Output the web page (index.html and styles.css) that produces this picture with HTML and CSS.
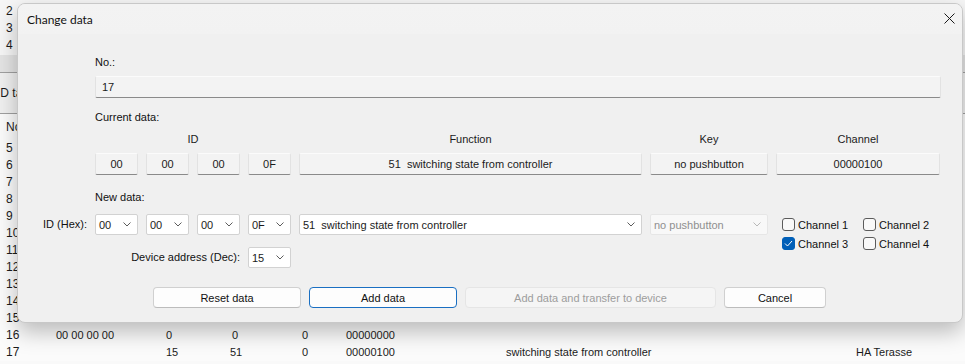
FILE: index.html
```html
<!DOCTYPE html>
<html lang="en">
    <head>
        <meta charset="UTF-8" />
        <title>Change data</title>
        <link rel="stylesheet" href="styles.css">
    </head>
    <body>
        <!-- main window behind the dialog -->
        <div class="app">
            <div class="top-list">
                <div class="item">2</div>
                <div class="item">3</div>
                <div class="item">4</div>
            </div>
            <div class="band"></div>
            <div class="tab-area"><span class="tab-label">ID table</span></div>
            <div class="table">
                <div class="row thead"><span>No.</span></div>
                <div class="row"><span>5</span></div>
                <div class="row"><span>6</span></div>
                <div class="row"><span>7</span></div>
                <div class="row"><span>8</span></div>
                <div class="row"><span>9</span></div>
                <div class="row"><span>10</span></div>
                <div class="row"><span>11</span></div>
                <div class="row"><span>12</span></div>
                <div class="row"><span>13</span></div>
                <div class="row"><span>14</span></div>
                <div class="row"><span>15</span></div>
                <div class="row">
                    <span>16</span><span>00 00 00 00</span><span>0</span><span class="mid">0</span><span>0</span><span>00000000</span><span></span><span></span>
                </div>
                <div class="row">
                    <span>17</span><span></span><span>15</span><span>51</span><span>0</span><span>00000100</span><span>switching state from controller</span><span>HA Terasse</span>
                </div>
            </div>
        </div>

        <!-- Change data dialog -->
        <div class="dialog">
            <div class="titlebar">
                <span class="title">Change data</span>
                <svg class="close" width="11" height="11" viewBox="0 0 11 11">
                    <path d="M0.5 0.5 L10.5 10.5 M10.5 0.5 L0.5 10.5" stroke="#1a1a1a" stroke-width="1" fill="none" />
                </svg>
            </div>
            <div class="dialog-body">
                <div class="caption first">No.:</div>
                <div class="readonly number-field">17</div>

                <div class="caption">Current data:</div>
                <div class="cols heads">
                    <span class="id-head">ID</span>
                    <span class="col-func">Function</span>
                    <span class="col-key">Key</span>
                    <span class="col-chan">Channel</span>
                </div>
                <div class="cols boxes">
                    <div class="readonly box col-id1">00</div>
                    <div class="readonly box">00</div>
                    <div class="readonly box">00</div>
                    <div class="readonly box">0F</div>
                    <div class="readonly box">51&nbsp; switching state from controller</div>
                    <div class="readonly box">no pushbutton</div>
                    <div class="readonly box">00000100</div>
                </div>

                <div class="caption new-caption">New data:</div>
                <div class="cols new-data">
                    <label class="side-label">ID (Hex):</label>
                    <div class="combo"><span>00</span><svg class="chev" width="8" height="5" viewBox="0 0 8 5"><path d="M0.5 0.5 L4 4 L7.5 0.5" /></svg></div>
                    <div class="combo"><span>00</span><svg class="chev" width="8" height="5" viewBox="0 0 8 5"><path d="M0.5 0.5 L4 4 L7.5 0.5" /></svg></div>
                    <div class="combo"><span>00</span><svg class="chev" width="8" height="5" viewBox="0 0 8 5"><path d="M0.5 0.5 L4 4 L7.5 0.5" /></svg></div>
                    <div class="combo"><span>0F</span><svg class="chev" width="8" height="5" viewBox="0 0 8 5"><path d="M0.5 0.5 L4 4 L7.5 0.5" /></svg></div>
                    <div class="combo"><span>51&nbsp; switching state from controller</span><svg class="chev" width="8" height="5" viewBox="0 0 8 5"><path d="M0.5 0.5 L4 4 L7.5 0.5" /></svg></div>
                    <div class="combo disabled"><span>no pushbutton</span><svg class="chev" width="8" height="5" viewBox="0 0 8 5"><path d="M0.5 0.5 L4 4 L7.5 0.5" /></svg></div>
                    <div class="channels">
                        <label class="check"><span class="box-check"></span>Channel 1</label>
                        <label class="check"><span class="box-check"></span>Channel 2</label>
                        <label class="check"><span class="box-check checked"><svg width="9" height="7" viewBox="0 0 9 7"><path d="M1 3.5 L3.5 6 L8 1" /></svg></span>Channel 3</label>
                        <label class="check"><span class="box-check"></span>Channel 4</label>
                    </div>
                    <label class="side-label device-label">Device address (Dec):</label>
                    <div class="combo device-combo"><span>15</span><svg class="chev" width="8" height="5" viewBox="0 0 8 5"><path d="M0.5 0.5 L4 4 L7.5 0.5" /></svg></div>
                </div>

                <div class="buttons">
                    <button class="btn btn-reset">Reset data</button>
                    <button class="btn btn-add">Add data</button>
                    <button class="btn btn-transfer" disabled>Add data and transfer to device</button>
                    <button class="btn btn-cancel">Cancel</button>
                </div>
            </div>
        </div>
    </body>
</html>
```

FILE: styles.css
```css
body {
    margin: 0;
    width: 965px;
    height: 364px;
    overflow: hidden;
    position: relative;
    background-color: #f9f9f9;
    color: #1b1b1b;
    font-family: "Liberation Sans", Arial, sans-serif;
    font-size: 11px;
}

/* ---- window behind ---- */
.top-list {
    height: 55px;
    box-sizing: border-box;
    padding-top: 3px;
    background-color: #f6f6f6;
    font-size: 12px;
}
.item {
    height: 17px;
    line-height: 17px;
    padding-left: 6px;
}
.band {
    height: 17px;
    background-color: #e4e4e4;
    border-bottom: 1px solid #a0a0a0;
}
.tab-area {
    height: 40px;
    line-height: 40px;
    background-color: #f0f0f0;
    border-bottom: 1px solid #a0a0a0;
    font-size: 12px;
}
.tab-label {
    display: inline-block;
    margin-left: -3px;
}
.table {
    background-color: #fbfbfb;
}
.row {
    display: grid;
    grid-template-columns: 50px 110px 64px 72px 44px 160px 350px 1fr;
    height: 17px;
    line-height: 17px;
    padding-left: 6px;
    white-space: nowrap;
}
.row > span:first-child {
    font-size: 12px;
}
.row.thead {
    height: 26px;
    line-height: 26px;
}
.mid {
    padding-left: 2px;
}

/* ---- dialog ---- */
.dialog {
    position: absolute;
    left: 17px;
    top: 3px;
    width: 946px;
    height: 320px;
    box-sizing: border-box;
    border: 1px solid #c8c8c8;
    border-radius: 8px;
    background-color: #f0f0f0;
    box-shadow: 0 9px 22px rgba(0, 0, 0, 0.26);
    overflow: hidden;
}
.titlebar {
    height: 30px;
    display: flex;
    align-items: center;
    justify-content: space-between;
    padding: 0 7px 0 9px;
    background: linear-gradient(#f3f3f3, #f2f2f2);
}
.title {
    font-family: Lato, "Noto Sans", sans-serif;
    font-size: 12px;
    color: #111;
}
.close {
    margin-top: -1px;
}

.dialog-body {
    display: flex;
    flex-direction: column;
    padding-left: 17px;
}
.caption {
    line-height: 16px;
    height: 16px;
    margin-left: 60px;
    margin-top: 11px;
    color: #111;
}
.caption.first {
    margin-top: 20px;
}
.caption.new-caption {
    margin-top: 14px;
}

/* read only fields */
.readonly {
    box-sizing: border-box;
    height: 22px;
    line-height: 20px;
    background-color: #f3f3f3;
    border: 1px solid #e2e2e2;
    border-top-color: #fbfbfb;
    border-bottom-color: #8a8a8a;
    border-radius: 2px;
    white-space: nowrap;
}
.number-field {
    margin-left: 60px;
    margin-top: 6px;
    width: 846px;
    padding-left: 6px;
}

/* shared column grid: label | 4 x ID | function | key | channel */
.cols {
    display: grid;
    grid-template-columns: 52px 43px 43px 43px 43px 343px 118px 164px;
    column-gap: 8px;
}
.heads {
    margin-top: 6px;
    line-height: 16px;
    text-align: center;
}
.id-head {
    grid-column: 2 / 6;
}
.boxes {
    margin-top: 6px;
}
.box {
    text-align: center;
}
.col-id1 {
    grid-column: 2;
}

/* new data */
.new-data {
    margin-top: 9px;
    grid-template-rows: 21px 21px;
    row-gap: 12px;
}
.side-label {
    justify-self: end;
    white-space: nowrap;
    line-height: 21px;
    color: #111;
}
.device-label {
    grid-column: 1 / 5;
    grid-row: 2;
}
.device-combo {
    grid-column: 5;
    grid-row: 2;
}
.combo {
    box-sizing: border-box;
    height: 21px;
    display: flex;
    align-items: center;
    justify-content: space-between;
    padding: 0 6px 0 3px;
    background-color: #fff;
    border: 1px solid #d2d2d2;
    border-radius: 2px;
    white-space: nowrap;
}
.chev path {
    fill: none;
    stroke: #5c5c5c;
    stroke-width: 1;
}
.combo.disabled {
    background-color: #f8f8f8;
    border-color: #e6e6e6;
    color: #8f8f8f;
}
.combo.disabled .chev path {
    stroke: #b8b8b8;
}

.channels {
    grid-column: 8;
    grid-row: 1 / 3;
    display: grid;
    grid-template-columns: 81px 81px;
    grid-auto-rows: 19px;
    padding-left: 6px;
    padding-top: 1px;
}
.check {
    display: flex;
    align-items: center;
    gap: 3px;
    white-space: nowrap;
    color: #111;
    font-size: 11px;
}
.box-check {
    box-sizing: border-box;
    width: 13px;
    height: 13px;
    border: 1px solid #5b5b5b;
    border-radius: 3px;
    background-color: #f9f9f9;
    display: flex;
    align-items: center;
    justify-content: center;
}
.box-check.checked {
    background-color: #005fb8;
    border-color: #005fb8;
}
.box-check path {
    fill: none;
    stroke: #fff;
    stroke-width: 1;
}

/* bottom buttons */
.buttons {
    display: flex;
    gap: 8px;
    margin-top: 19px;
    margin-left: 118px;
}
.btn {
    box-sizing: border-box;
    height: 21px;
    padding: 0;
    font-family: inherit;
    font-size: 11px;
    color: #111;
    background-color: #fdfdfd;
    border: 1px solid #d0d0d0;
    border-bottom-color: #bcbcbc;
    border-radius: 4px;
}
.btn-reset,
.btn-add {
    width: 148px;
}
.btn-add {
    border: 1px solid #1a6fc2;
}
.btn-transfer {
    width: 251px;
    background-color: #f5f5f5;
    border-color: #e5e5e5;
    color: #9d9d9d;
}
.btn-cancel {
    width: 102px;
}
```
